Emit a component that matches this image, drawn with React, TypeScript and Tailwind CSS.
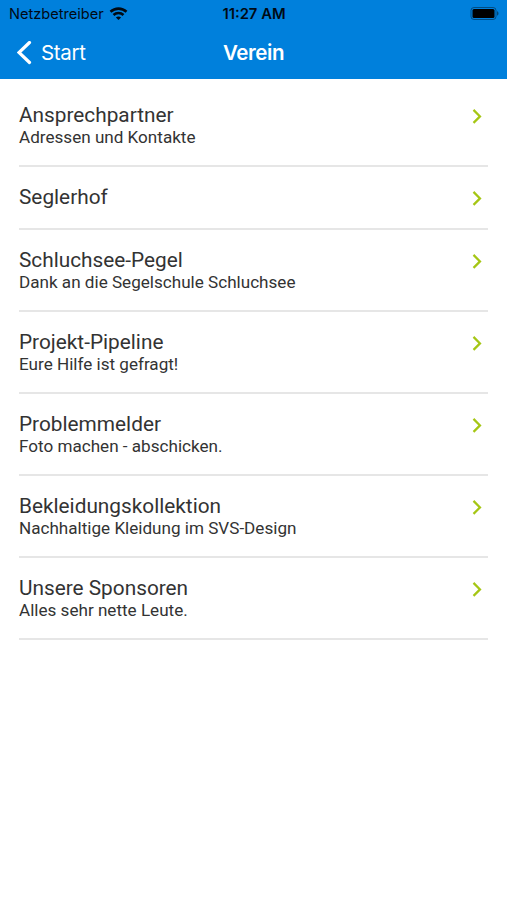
const items = [
  { title: "Ansprechpartner", subtitle: "Adressen und Kontakte" },
  { title: "Seglerhof" },
  { title: "Schluchsee-Pegel", subtitle: "Dank an die Segelschule Schluchsee" },
  { title: "Projekt-Pipeline", subtitle: "Eure Hilfe ist gefragt!" },
  { title: "Problemmelder", subtitle: "Foto machen - abschicken." },
  { title: "Bekleidungskollektion", subtitle: "Nachhaltige Kleidung im SVS-Design" },
  { title: "Unsere Sponsoren", subtitle: "Alles sehr nette Leute." },
]

function StatusBar() {
  return (
    <div className="grid h-[27px] grid-cols-3 items-center pl-[9px] pr-[8px] text-[#000a14]">
      <div className="flex items-center gap-[5px]">
        <span className="pt-px text-[14.6px] leading-none">Netzbetreiber</span>
        <svg width="19" height="13" viewBox="0 0 18 13" fill="none" stroke="currentColor" strokeWidth="2.6">
          <path d="M1 4.8C5.5.6 12.5.6 17 4.8" />
          <path d="M4 8c2.8-2.6 7.2-2.6 10 0" />
          <path d="M9 13L6.4 10.4c1.5-1.3 3.7-1.3 5.2 0z" fill="currentColor" stroke="none" />
        </svg>
      </div>
      <span className="pt-px text-center text-[14.8px] font-semibold leading-none">11:27 AM</span>
      <svg className="justify-self-end" width="29" height="13" viewBox="0 0 29 13">
        <rect x="1" y=".5" width="25" height="12" rx="3" fill="none" stroke="#000" strokeOpacity=".4" />
        <rect x="2.5" y="2" width="22" height="9" rx="1.5" />
        <path d="M27 4.3c2 .6 2 3.8 0 4.4z" fillOpacity=".45" />
      </svg>
    </div>
  )
}

function Header() {
  return (
    <header className="h-[79px] bg-[#0080dc] font-['Inter',sans-serif]">
      <StatusBar />
      <div className="grid h-[52px] grid-cols-3 items-center px-[17px] text-white">
        <div className="flex items-center gap-[9px]">
          <svg width="15" height="24" viewBox="0 0 15 24" fill="none" stroke="currentColor" strokeWidth="3.2" strokeLinecap="round">
            <path d="M12.5 1.500L2 11.500l10.500 10" />
          </svg>
          <span className="pt-px text-[20.5px] leading-none tracking-[-0.3px]">Start</span>
        </div>
        <h1 className="pt-px text-center text-[20.5px] font-semibold leading-none tracking-[-0.4px]">Verein</h1>
      </div>
    </header>
  )
}

export default function App() {
  return (
    <div className="min-h-screen bg-white font-['Roboto',sans-serif] text-[#333]">
      <Header />
      <ul className="px-[19px] pt-[6px]">
        {items.map((item) => (
          <li
            key={item.title}
            className={`flex justify-between border-b-2 border-[#e6e6e6] pr-[6px] pt-[18px] ${item.subtitle ? "h-[82px]" : "h-[63px]"}`}
          >
            <div>
              <h2 className="text-[20.8px] leading-[25px]">{item.title}</h2>
              {item.subtitle && <p className="-mt-px text-[17.1px] leading-[20px]">{item.subtitle}</p>}
            </div>
            <svg className="mt-[5px]" width="10" height="16" viewBox="0 0 10 16" fill="none" stroke="#a5c614" strokeWidth="2.2">
              <path d="M1.5 1.9L8 8.4l-6.5 6.5" />
            </svg>
          </li>
        ))}
      </ul>
    </div>
  )
}
